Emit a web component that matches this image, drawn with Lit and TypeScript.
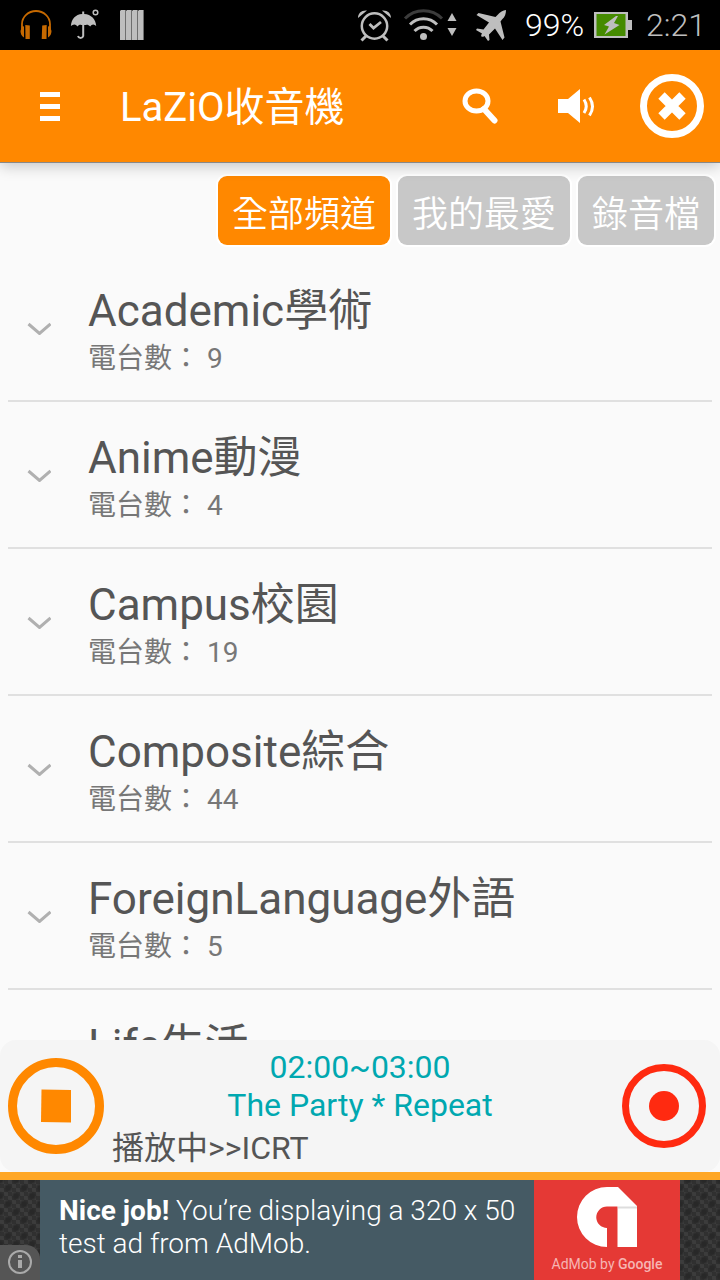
import { LitElement, html, css, svg, nothing } from "lit";
import { customElement, property, state } from "lit/decorators.js";
import { classMap } from "lit/directives/class-map.js";
import { ifDefined } from "lit/directives/if-defined.js";

interface Category {
  name: string;
  stations?: number;
}

const CATEGORIES: Category[] = [
  { name: "Academic學術", stations: 9 },
  { name: "Anime動漫", stations: 4 },
  { name: "Campus校園", stations: 19 },
  { name: "Composite綜合", stations: 44 },
  { name: "ForeignLanguage外語", stations: 5 },
  { name: "Life生活" },
];

const TABS = ["全部頻道", "我的最愛", "錄音檔"];

@customElement("status-bar")
class StatusBar extends LitElement {
  static styles = css`
    :host {
      display: flex;
      align-items: center;
      justify-content: space-between;
      flex: none;
      height: 50px;
      padding: 0 14px 0 20px;
      background: #000;
      color: #bebebe;
      font-size: 32px;
      line-height: 50px;
      font-weight: 300;
    }
    .group {
      display: flex;
      align-items: center;
      gap: 10px;
    }
    .notices {
      gap: 18px;
    }
    svg {
      display: block;
      flex: none;
    }
    .percent {
      color: #fff;
    }
  `;

  render() {
    return html`
      <div class="group notices">
        <svg width="32" height="34" viewBox="20 8 32 34" fill="#c66900">
          <path d="M22 29v-5a14 13 0 0 1 28 0v5" fill="none" stroke="#c66900" stroke-width="1.800" />
          <path d="M25.300 25l4.500.5v13.500h-4.300zM46.700 25l-4.500.5-.5 13.500h4.800z" />
          <path d="M22 26l2 .5v11c-2.500-1.500-3.500-4-3.500-6.500zM50 26l-2 .5v11c2.500-1.500 3.500-4 3.500-6.500z" />
        </svg>
        <svg width="32" height="34" viewBox="70 8 32 34" fill="#bebebe">
          <path d="M82.200 11.500h2v2.500c7 .5 11.500 5 12 12-2-2.200-4.500-2-6 .5-1.600-1.600-3-2-4.200-1.500h-4.600c-1.400-.5-2.800 0-4 1.500-1.400-2.500-4.200-2.700-6.500-.5.5-7 4.500-11.500 11.300-12z" />
          <path d="M83.200 24v12a2.700 2.700 0 0 1-5.200 0" fill="none" stroke="#bebebe" stroke-width="2" />
          <circle cx="95.500" cy="12.500" r="2.300" fill="none" stroke="#bebebe" stroke-width="1.500" />
        </svg>
        <svg width="24" height="34" viewBox="120 8 24 34">
          ${[120, 126, 132, 138].map(
            (x) => svg`<path d="M${x} 11l1-1h5v30h-6z" fill="#bebebe" /><path d="M${x + 5.5} 10v30" stroke="#6e6e6e" />`,
          )}
        </svg>
      </div>
      <div class="group">
        <svg width="36" height="34" viewBox="358 8 36 34" fill="none" stroke="#bebebe" stroke-width="2.500">
          <circle cx="375.500" cy="26" r="12.700" />
          <path d="M370.500 24l4 4 7.500-6" stroke-width="2.800" />
          <path d="M367 36l-4.500 4.500M384 36l4.500 4.500" stroke-width="3" />
          <path d="M359 18c0-5 3.500-8 9-7.500zM392 18c0-5-3.500-8-9-7.500z" fill="#bebebe" stroke="none" />
        </svg>
        <svg width="56" height="34" viewBox="404 8 56 34" fill="none" stroke-width="3">
          <path d="M406 18.500a26 26 0 0 1 37 0" stroke="#3c3c3c" />
          <path d="M411 24.500a19 19 0 0 1 27 0M415.500 31a12.500 12.500 0 0 1 18 0" stroke="#bebebe" />
          <circle cx="424.500" cy="36.500" r="3.500" fill="#bebebe" />
          <path d="M448.500 21l4.500-8 4.500 8zM448.500 28l4.500 8 4.500-8z" fill="#bebebe" />
        </svg>
        <svg width="46" height="34" viewBox="470 8 46 34" fill="#bebebe">
          <path d="M507 10c-3 .5-6 2-8.500 5l-2 2-17-4-2 2 12.500 7.500-5.500 7-6.500-1-1 1.500 6 3.500c-1 1.500-1 2.500-.5 3 .5.500 1.500.5 3-.5l3.500 5 1.500-1-.5-5.500 6-6 7.500 11.500 2-2.500-4-16 1.500-2c3-2.500 4-6 4-9.500z" />
        </svg>
        <span class="percent">99%</span>
        <svg width="42" height="34" viewBox="594 8 42 34">
          <path d="M594 12h34v8h4v10h-4v8h-34z" fill="#bebebe" />
          <path d="M596.500 14h29v22h-29z" fill="#458b00" />
          <path d="M616 16l-12 9 5 1.500-4.500 8 15-9.500-5.500-2 4-7z" fill="#bebebe" />
        </svg>
        <time>2:21</time>
      </div>
    `;
  }
}

@customElement("app-bar")
class AppBar extends LitElement {
  static styles = css`
    :host {
      display: flex;
      align-items: center;
      flex: none;
      height: 112px;
      padding: 0 8px 0 26px;
      background: #ff8800;
      color: #fff;
      border-bottom: 1px solid #888;
      z-index: 1;
      box-shadow: 0 3px 14px rgba(0, 0, 0, 0.22);
    }
    button {
      display: grid;
      place-items: center;
      width: 48px;
      height: 80px;
      padding: 0;
      border: 0;
      background: none;
      color: inherit;
    }
    h1 {
      flex: 1;
      margin: 4px 0 0 46px;
      font-size: 40px;
      line-height: 48px;
      font-weight: 400;
    }
    .actions {
      display: flex;
      gap: 16px;
    }
    .actions button {
      width: 80px;
    }
  `;

  render() {
    return html`
      <button aria-label="選單">
        <svg width="20" height="30" viewBox="0 0 20 30" fill="#fff">
          <path d="M0 1h20v5H0zM0 13h20v5H0zM0 25h20v5H0z" />
        </svg>
      </button>
      <h1>LaZiO收音機</h1>
      <div class="actions">
        <button aria-label="搜尋">
          <svg width="36" height="36" viewBox="462 88 36 36" fill="none" stroke="#fff">
            <ellipse cx="476.500" cy="101" rx="11.500" ry="10" stroke-width="5" />
            <path d="M484 109l10.500 11.500" stroke-width="6" stroke-linecap="round" />
          </svg>
        </button>
        <button aria-label="音量">
          <svg width="38" height="36" viewBox="557 88 38 36" fill="#fff">
            <path d="M558 99h10l12-10v34l-12-10h-10z" />
            <path d="M584 99.500q4.500 7 0 13.500M589.500 97.500q6 9 0 18" fill="none" stroke="#fff" stroke-width="3" />
          </svg>
        </button>
        <button aria-label="關閉">
          <svg width="64" height="64" viewBox="0 0 64 64" fill="none" stroke="#fff">
            <circle cx="32" cy="32" r="28.500" stroke-width="7" />
            <path d="M21.500 21.500l21 21M42.500 21.500l-21 21" stroke-width="9" />
          </svg>
        </button>
      </div>
    `;
  }
}

@customElement("category-row")
class CategoryRow extends LitElement {
  @property() name = "";
  @property({ type: Number }) stations?: number;

  static styles = css`
    :host {
      display: block;
    }
    button {
      display: flex;
      align-items: center;
      width: 100%;
      height: 147px;
      padding: 0 19px;
      border: 0;
      border-bottom: 2px solid #e0e0e0;
      background: none;
      font: inherit;
      text-align: left;
      gap: 37px;
    }
    .text {
      align-self: flex-start;
      display: grid;
      padding-top: 30px;
    }
    .name {
      font-size: 44px;
      line-height: 52px;
      color: #555;
    }
    .count {
      font-size: 28px;
      line-height: 44px;
      color: #777;
    }
  `;

  render() {
    return html`
      <button aria-expanded="false">
        <svg width="24" height="14" viewBox="0 0 24 14" fill="none" stroke="#b0b0b0" stroke-width="3">
          <path d="M1.500 3l11 9.500L23.500 3" />
        </svg>
        <span class="text">
          <span class="name">${this.name}</span>
          ${this.stations === undefined
            ? nothing
            : html`<span class="count">電台數： ${this.stations}</span>`}
        </span>
      </button>
    `;
  }
}

@customElement("player-bar")
class PlayerBar extends LitElement {
  static styles = css`
    :host {
      display: flex;
      align-items: center;
      flex: none;
      height: 132px;
      padding: 0 14px 0 8px;
      gap: 8px;
      box-sizing: border-box;
      border-radius: 16px;
      background: #f5f5f5;
      font-size: 32px;
      line-height: 38px;
    }
    button {
      padding: 0;
      border: 0;
      background: none;
    }
    svg {
      display: block;
    }
    .info {
      flex: 1;
      display: grid;
      padding: 8px 6px 0 0;
    }
    .program {
      margin: 0;
      color: #00a8b0;
      text-align: center;
    }
    .playing {
      margin: 0;
      line-height: 48px;
      color: #555;
    }
  `;

  render() {
    return html`
      <button aria-label="停止">
        <svg width="96" height="96" viewBox="0 0 96 96">
          <circle cx="48" cy="48" r="43.500" fill="none" stroke="#ff8800" stroke-width="9" />
          <path d="M33.500 31.500l29.500.5v32.500l-30-.5z" fill="#ff8800" />
        </svg>
      </button>
      <div class="info">
        <p class="program">02:00~03:00<br />The Party * Repeat</p>
        <p class="playing">播放中&gt;&gt;ICRT</p>
      </div>
      <button aria-label="錄音">
        <svg width="84" height="84" viewBox="0 0 84 84">
          <circle cx="42" cy="42" r="38.500" fill="none" stroke="#ff2a10" stroke-width="7" />
          <circle cx="42" cy="42" r="15" fill="#ff2a10" />
        </svg>
      </button>
    `;
  }
}

@customElement("ad-banner")
class AdBanner extends LitElement {
  static styles = css`
    :host {
      display: grid;
      grid-template-columns: 40px 1fr 40px;
      flex: none;
      height: 100px;
      border-top: 8px solid #ffa726;
      background-color: #333;
      background-image: radial-gradient(#282828 2px, transparent 5px), radial-gradient(#282828 2px, transparent 5px),
        conic-gradient(#303030 25%, #3c3c3c 0 50%, #303030 0 75%, #3c3c3c 0);
      background-size: 16px 16px, 16px 16px, 8px 8px;
      background-position: 0 0, 8px 8px, 0 0;
    }
    .info {
      align-self: end;
      display: grid;
      place-items: center;
      width: 40px;
      height: 36px;
      padding: 0;
      border: 0;
      border-radius: 0 14px 0 0;
      background: #555;
    }
    .ad {
      display: grid;
      grid-template-columns: 1fr 146px;
      background: #455a64;
      color: #fff;
      text-decoration: none;
    }
    .copy {
      padding: 14px 0 0 19px;
      font-size: 28px;
      line-height: 33px;
      font-weight: 300;
    }
    .copy b {
      font-weight: 700;
    }
    .brand {
      display: grid;
      justify-items: center;
      align-content: start;
      padding-top: 7px;
      background: #e53935;
      color: #f6b5b3;
      font-size: 14px;
      line-height: 34px;
    }
    .brand b {
      font-weight: 500;
    }
  `;

  render() {
    return html`
      <button class="info" aria-label="廣告資訊">
        <svg width="26" height="26" viewBox="0 0 26 26" fill="none" stroke="#aaa">
          <circle cx="13" cy="12" r="11" stroke-width="2" />
          <path d="M13 5v3M13 10v8" stroke-width="4" />
        </svg>
      </button>
      <a class="ad" href="#">
        <span class="copy"><b>Nice job!</b> You’re displaying a 320 x 50<br />test ad from AdMob.</span>
        <span class="brand">
          <svg width="60" height="60" viewBox="0 0 60 60" fill="#fff">
            <path d="M30 60a30 30 0 0 1 0-60h11l19 19v41H40.500V19.500H30a10.700 10.700 0 0 0 0 21.500z" />
            <path d="M41 19.500h19v2H41z" fill="#ddd" />
          </svg>
          <span>AdMob by <b>Google</b></span>
        </span>
      </a>
      <span></span>
    `;
  }
}

@customElement("app-root")
class AppRoot extends LitElement {
  @state() private selected = 0;

  static styles = css`
    :host {
      display: flex;
      flex-direction: column;
      height: 100vh;
      background: #fafafa;
      font-family: Roboto, "Noto Sans CJK TC", sans-serif;
    }
    .tabs {
      display: flex;
      justify-content: flex-end;
      flex: none;
      gap: 8px;
      padding: 13px 6px 10px;
    }
    .tab {
      height: 69px;
      padding: 0 14px;
      border: 0;
      border-radius: 9px;
      background: #c8c8c8;
      box-shadow: 0 0 0 2px #fff;
      color: #fff;
      font: inherit;
      font-size: 36px;
      font-weight: 350;
    }
    .active {
      background: #ff8800;
    }
    .list {
      flex: 1;
      min-height: 0;
      overflow: hidden;
      margin: 0;
      padding: 0 8px;
      list-style: none;
    }
  `;

  render() {
    return html`
      <status-bar></status-bar>
      <app-bar></app-bar>
      <nav class="tabs">
        ${TABS.map(
          (label, i) => html`<button
            class=${classMap({ tab: true, active: i === this.selected })}
            aria-pressed=${i === this.selected}
            @click=${() => (this.selected = i)}
          >${label}</button>`,
        )}
      </nav>
      <ul class="list">
        ${CATEGORIES.map(
          (c) => html`<li>
            <category-row name=${c.name} stations=${ifDefined(c.stations)}></category-row>
          </li>`,
        )}
      </ul>
      <player-bar></player-bar>
      <ad-banner></ad-banner>
    `;
  }
}
